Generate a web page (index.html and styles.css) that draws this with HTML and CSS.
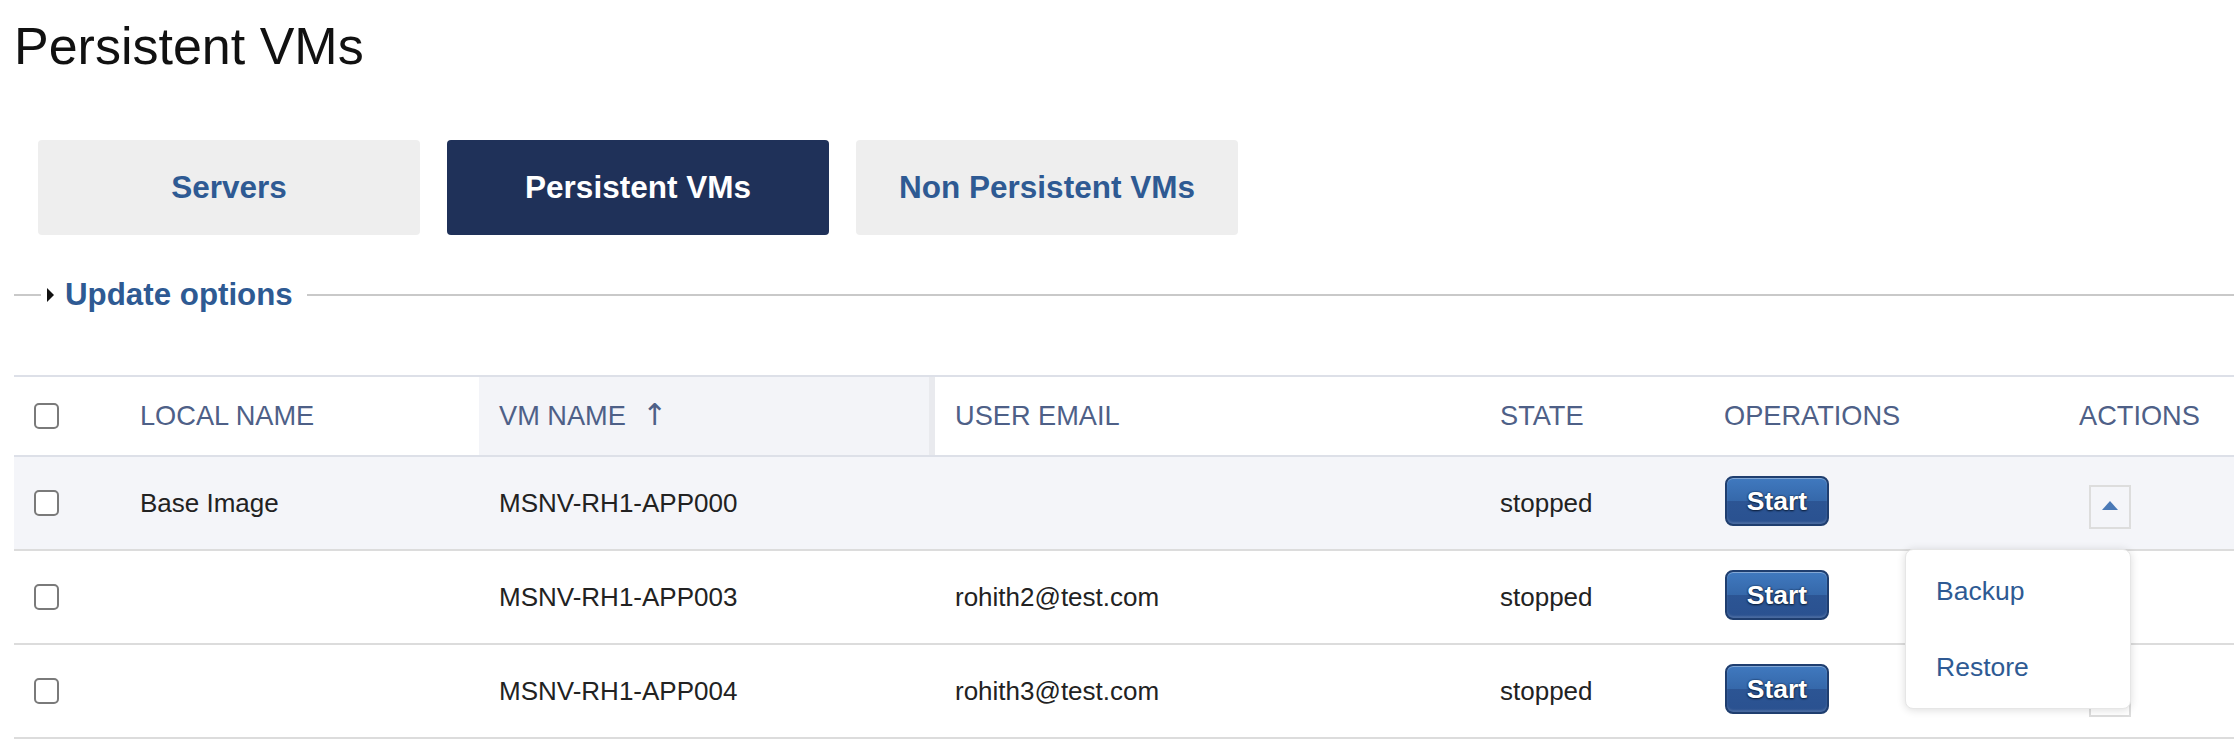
FILE: index.html
```html
<!DOCTYPE html>
<html>
<head>
<meta charset="utf-8">
<link rel="stylesheet" href="styles.css">
</head>
<body>
<div class="page">
  <h1 class="title">Persistent VMs</h1>
  <div class="tabs">
    <div class="tab">Servers</div>
    <div class="tab active">Persistent VMs</div>
    <div class="tab">Non Persistent VMs</div>
  </div>
  <div class="fieldset">
    <span class="rule-short"></span>
    <span class="caret"></span>
    <span class="legend">Update options</span>
    <span class="rule"></span>
  </div>
  <div class="table">
    <div class="row head">
      <div class="cell"><span class="check"></span></div>
      <div class="cell">LOCAL NAME</div>
      <div class="cell sorted">VM NAME <span class="arrow">&#8593;</span></div>
      <div class="cell">USER EMAIL</div>
      <div class="cell">STATE</div>
      <div class="cell">OPERATIONS</div>
      <div class="cell">ACTIONS</div>
    </div>
    <div class="row hover">
      <div class="cell"><span class="check"></span></div>
      <div class="cell">Base Image</div>
      <div class="cell">MSNV-RH1-APP000</div>
      <div class="cell"></div>
      <div class="cell">stopped</div>
      <div class="cell"><span class="btn">Start</span></div>
      <div class="cell actions">
        <span class="toggle"><span class="tri"></span></span>
        <div class="menu">
          <div class="item">Backup</div>
          <div class="item">Restore</div>
        </div>
      </div>
    </div>
    <div class="row">
      <div class="cell"><span class="check"></span></div>
      <div class="cell"></div>
      <div class="cell">MSNV-RH1-APP003</div>
      <div class="cell">rohith2@test.com</div>
      <div class="cell">stopped</div>
      <div class="cell"><span class="btn">Start</span></div>
      <div class="cell actions"><span class="toggle"><span class="tri"></span></span></div>
    </div>
    <div class="row">
      <div class="cell"><span class="check"></span></div>
      <div class="cell"></div>
      <div class="cell">MSNV-RH1-APP004</div>
      <div class="cell">rohith3@test.com</div>
      <div class="cell">stopped</div>
      <div class="cell"><span class="btn">Start</span></div>
      <div class="cell actions"><span class="toggle"><span class="tri"></span></span></div>
    </div>
  </div>
</div>
</body>
</html>
```
FILE: styles.css
```css
* { box-sizing: border-box; }
body {
  margin: 0;
  background: #fff;
  font-family: "Liberation Sans", Arial, sans-serif;
  color: #222;
  overflow: hidden;
}
.page { padding-left: 14px; }
.title {
  margin: 16px 0 0;
  font-size: 52px;
  line-height: 60px;
  font-weight: normal;
  color: #111;
}
.tabs {
  display: flex;
  gap: 27px;
  margin: 64px 0 0 24px;
}
.tab {
  width: 382px;
  height: 95px;
  border-radius: 4px;
  background: #eeeeee;
  color: #2e5a93;
  font-weight: bold;
  font-size: 31.5px;
  display: flex;
  align-items: center;
  justify-content: center;
}
.tab.active { background: #1f3159; color: #fff; }
.fieldset {
  display: flex;
  align-items: center;
  height: 36px;
  margin-top: 42px;
}
.rule-short { width: 27px; height: 2px; background: #c9c9c9; }
.caret {
  width: 0; height: 0;
  margin-left: 6px;
  border-top: 7px solid transparent;
  border-bottom: 7px solid transparent;
  border-left: 7px solid #111;
}
.legend {
  margin-left: 11px;
  font-size: 31.3px;
  font-weight: bold;
  color: #2e5a93;
}
.rule { flex: 1; height: 2px; background: #c9c9c9; margin-left: 14px; }
.table { margin-top: 62px; }
.row {
  display: grid;
  grid-template-columns: 106px 359px 456px 545px 224px 355px 1fr;
  height: 94px;
  border-bottom: 2px solid #dcdcdc;
  font-size: 26px;
  align-items: stretch;
}
.row.head {
  height: 82px;
  border-top: 2px solid #dde0e8;
  border-bottom: 2px solid #dde0e8;
  color: #4e6087;
  font-size: 27.2px;
}
.row.hover { background: #f4f5f9; }
.cell {
  display: flex;
  align-items: center;
  padding-left: 20px;
  white-space: nowrap;
}
.cell.sorted {
  background: #f3f4f8;
  border-right: 6px solid #e9eaee;
}
.arrow {
  margin-left: 16px;
  font-size: 30px;
  font-family: "DejaVu Sans", sans-serif;
  margin-top: -4px;
}
.check {
  width: 25px; height: 26px;
  border: 2px solid #7a7a7a;
  border-radius: 5px;
  background: #fff;
}
.btn {
  width: 104px;
  height: 50px;
  border-radius: 8px;
  border: 2px solid #1f3e6f;
  background: linear-gradient(#4079bf 0%, #3568aa 50%, #2c5594 50%, #2a5190 100%);
  box-shadow: inset 0 1px 0 rgba(255,255,255,.35), inset 0 -2px 2px rgba(255,255,255,.15);
  color: #fff;
  font-weight: bold;
  font-size: 26.5px;
  display: flex;
  align-items: center;
  justify-content: center;
  text-shadow: 0 1px 2px #0c1e3a, 0 0 2px #0c1e3a;
  margin-top: -4px;
  margin-left: 1px;
}
.actions { position: relative; padding-left: 30px; }
.toggle {
  width: 42px; height: 44px;
  border: 2px solid #dddddd;
  display: flex;
  align-items: center;
  justify-content: center;
  margin-top: 8px;
}
.tri {
  width: 0; height: 0;
  border-left: 8px solid transparent;
  border-right: 8px solid transparent;
  border-bottom: 9px solid #4a79b6;
  margin-top: -4px;
}
.menu {
  position: absolute;
  left: -154px;
  top: 92px;
  width: 226px;
  padding: 3px 0;
  background: #fff;
  border: 1px solid #e6e6e6;
  border-radius: 8px;
  box-shadow: 0 1px 8px rgba(0,0,0,.14);
  z-index: 5;
}
.item {
  height: 76px;
  display: flex;
  align-items: center;
  padding-left: 30px;
  font-size: 26.5px;
  color: #2e5a93;
}
```
